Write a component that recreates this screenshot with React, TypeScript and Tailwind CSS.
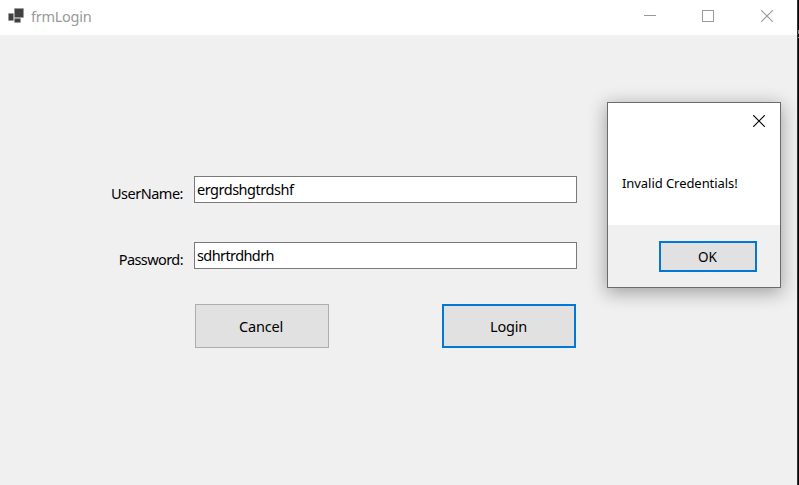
import React from 'react';

function AppIcon() {
  return (
    <svg width="16" height="16" viewBox="0 0 16 16" className="shrink-0">
      <rect x="6" y="0" width="10" height="10" fill="#c4c4c4" />
      <rect x="0" y="5" width="6" height="8" fill="#c4c4c4" />
      <rect x="6" y="10" width="7" height="5" fill="#c4c4c4" />
      <rect x="6.7" y="0.7" width="8.6" height="8.6" fill="#404040" />
      <rect x="0.7" y="5.7" width="4.6" height="6.6" fill="#404040" />
      <rect x="6.7" y="10.7" width="5.6" height="3.6" fill="#404040" />
    </svg>
  );
}

function CloseGlyph({ color }: { color: string }) {
  return (
    <svg width="12" height="12" viewBox="0 0 12 12" fill="none" stroke={color} strokeWidth="1.15">
      <path d="M0.2 0.2L11.8 11.8M11.8 0.2L0.2 11.8" />
    </svg>
  );
}

function TitleBar() {
  return (
    <header className="flex h-[35px] shrink-0 bg-white pl-2">
      <div className="flex flex-1 pt-2">
        <AppIcon />
        <span className="ml-[7px] -mt-0.5 text-[14.5px] leading-5 tracking-[-0.26px] text-[#999999]">frmLogin</span>
      </div>
      <div className="flex pt-2.5 pr-6">
        <svg width="12" height="12" shapeRendering="crispEdges">
          <rect y="5" width="12" height="1" fill="#999999" />
        </svg>
        <svg width="12" height="12" shapeRendering="crispEdges" className="mr-[47px] ml-[46px]">
          <rect x="0.5" y="0.5" width="11" height="11" fill="none" stroke="#999999" />
        </svg>
        <CloseGlyph color="#999999" />
      </div>
    </header>
  );
}

function Field({ label, value, spacing, valueSpacing }: { label: string; value: string; spacing: string; valueSpacing: string }) {
  return (
    <div className="flex h-[27px]">
      <label className={`w-[183px] pt-[7px] text-right leading-5 whitespace-nowrap ${spacing}`}>{label}</label>
      <div className={`ml-[11px] w-[383px] border border-[#7a7a7a] bg-white pt-0.5 pl-0.5 leading-5 ${valueSpacing}`}>{value}</div>
    </div>
  );
}

function MessageBox() {
  return (
    <div className="absolute top-[102px] left-[607px] flex h-[186px] w-[174px] flex-col border border-[#6b6b6b] bg-white text-[13px] shadow-[0_4px_17px_1px_rgba(0,0,0,0.33)]">
      <div className="flex justify-end pt-3 pr-[15px]">
        <CloseGlyph color="#000000" />
      </div>
      <p className="mt-[47px] pl-3.5 leading-[18px] tracking-[-0.06px] whitespace-nowrap">Invalid Credentials!</p>
      <div className="mt-auto flex h-[62px] justify-end bg-[#f0f0f0] pt-4 pr-[23px]">
        <button className="h-[31px] w-[98px] border-2 border-[#0078d7] bg-[#e1e1e1] pr-px text-[13.5px] leading-5">OK</button>
      </div>
    </div>
  );
}

export default function App() {
  return (
    <div className="flex h-[485px] w-[799px] overflow-hidden bg-[#f0f0f0] font-['Noto_Sans','Open_Sans',sans-serif] text-[14.5px] text-black">
      <div className="relative flex w-[797px] flex-col overflow-hidden">
        <TitleBar />
        <main className="flex flex-1 flex-col pt-[141px]">
          <Field label="UserName:" value="ergrdshgtrdshf" spacing="tracking-[-0.5px]" valueSpacing="tracking-[-0.48px]" />
          <div className="h-[39px]" />
          <Field label="Password:" value="sdhrtrdhdrh" spacing="tracking-[-0.58px]" valueSpacing="tracking-[-0.6px]" />
          <div className="mt-[35px] ml-[195px] flex gap-[113px]">
            <button className="h-11 w-[134px] border border-[#adadad] bg-[#e1e1e1] pr-0.5 leading-5 tracking-[-0.2px]">Cancel</button>
            <button className="h-11 w-[134px] border-2 border-[#0078d7] bg-[#e1e1e1] pr-px leading-5 tracking-[-0.2px]">Login</button>
          </div>
        </main>
        <MessageBox />
      </div>
      <div className="w-0.5 border-l border-[#343434] bg-[#080808]">
        <div className="mt-[30px] h-1 bg-[#8c8170]" />
        <div className="mt-[3px] h-px bg-[#999999]" />
      </div>
    </div>
  );
}
